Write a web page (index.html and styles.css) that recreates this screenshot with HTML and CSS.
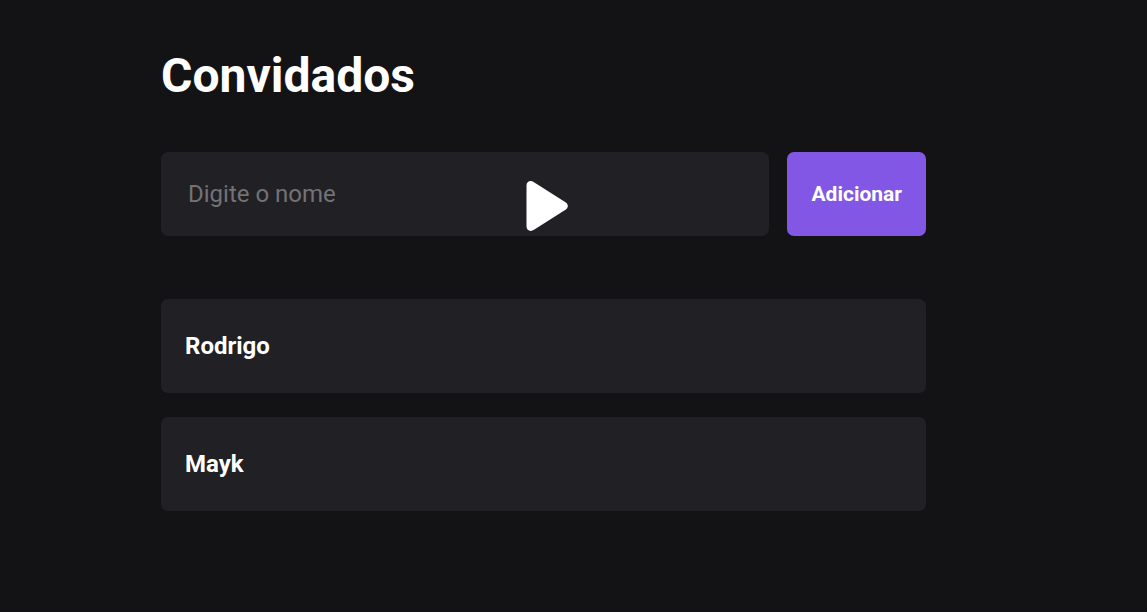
FILE: index.html
```html
<!DOCTYPE html>
<html lang="pt-BR">
<head>
<meta charset="utf-8">
<meta name="viewport" content="width=device-width, initial-scale=1">
<title>Convidados</title>
<link rel="stylesheet" href="styles.css">
</head>
<body>
<main class="page">
  <h1 class="title">Convidados</h1>
  <form class="guest-form">
    <input class="guest-input" type="text" placeholder="Digite o nome" aria-label="Nome do convidado">
    <button class="add-button" type="button">Adicionar</button>
    <button class="play-button" type="button" aria-label="Reproduzir">
      <svg class="play-icon" viewBox="0 0 42 50" aria-hidden="true">
        <path d="M0.5 4.5C0.5 0.5 4.5-1.2 8 1.2L39.5 21.2C42.6 23.2 42.6 26.8 39.5 28.8L8 48.8C4.5 51.2 0.5 49.5 0.5 45.5Z" fill="#fff"/>
      </svg>
    </button>
  </form>
  <ul class="guest-list">
    <li class="guest">Rodrigo</li>
    <li class="guest">Mayk</li>
  </ul>
</main>
</body>
</html>
```

FILE: styles.css
```css
* {
  box-sizing: border-box;
}

body {
  margin: 0;
  min-height: 100vh;
  background: #131315;
  color: #fff;
  font-family: Roboto, "Liberation Sans", sans-serif;
}

.page {
  max-width: 1147px;
  padding: 48px 221px 48px 161px;
}

.title {
  margin: 0 0 48px;
  font-size: 48px;
  line-height: 56px;
  font-weight: 700;
}

.guest-form {
  position: relative;
  display: flex;
  gap: 18px;
  margin-bottom: 63px;
}

.guest-input {
  flex: 1;
  min-width: 0;
  height: 84px;
  padding: 0 27px;
  border: 0;
  border-radius: 7px;
  background: #212024;
  color: #fff;
  font: 400 24px Roboto, "Liberation Sans", sans-serif;
}

.guest-input::placeholder {
  color: #737277;
  opacity: 1;
}

.add-button {
  padding: 0 24px;
  border: 0;
  border-radius: 7px;
  background: #8257e5;
  color: #fff;
  font: 700 21px Roboto, "Liberation Sans", sans-serif;
}

.play-button {
  position: absolute;
  top: 29px;
  left: 365px;
  width: 42px;
  height: 50px;
  padding: 0;
  border: 0;
  background: none;
}

.play-icon {
  display: block;
  width: 100%;
  height: 100%;
}

.guest-list {
  display: flex;
  flex-direction: column;
  gap: 24px;
  margin: 0;
  padding: 0;
  list-style: none;
}

.guest {
  padding: 32px 24px;
  border-radius: 7px;
  background: #212024;
  font-size: 24px;
  line-height: 30px;
  font-weight: 700;
}
```
